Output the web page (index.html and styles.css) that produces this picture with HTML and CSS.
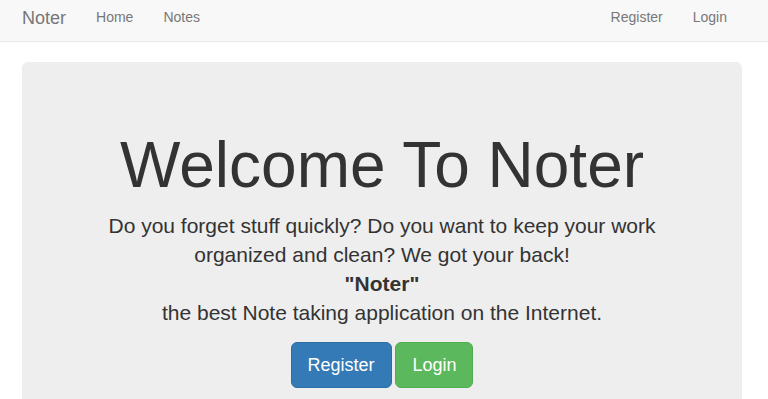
FILE: index.html
```html
<!DOCTYPE html>
<html>
<head>
<meta charset="utf-8">
<title>Noter</title>
<link rel="stylesheet" href="styles.css">
</head>
<body>
<nav class="navbar">
  <div class="container nav-inner">
    <div class="nav-left">
      <a class="brand" href="#">Noter</a>
      <a class="nav-link" href="#">Home</a>
      <a class="nav-link" href="#">Notes</a>
    </div>
    <div class="nav-right">
      <a class="nav-link" href="#">Register</a>
      <a class="nav-link" href="#">Login</a>
    </div>
  </div>
</nav>
<div class="container">
  <div class="jumbotron">
    <h1 class="title">Welcome To Noter</h1>
    <p class="lead">Do you forget stuff quickly? Do you want to keep your work organized and clean? We got your back!<br><b>"Noter"</b><br>the best Note taking application on the Internet.</p>
    <p class="actions"><a class="btn btn-primary" href="#">Register</a> <a class="btn btn-success" href="#">Login</a></p>
  </div>
</div>
</body>
</html>
```
FILE: styles.css
```css
* { box-sizing: border-box; }
html, body { margin: 0; padding: 0; }
body {
  font-family: "Liberation Sans", Arial, Helvetica, sans-serif;
  font-size: 14px;
  line-height: 1.42857;
  color: #333;
  background: #fff;
}
a { text-decoration: none; }
.container {
  width: 720px;
  margin-left: 22px;
}
.navbar {
  background: #f8f8f8;
  border-bottom: 1px solid #e7e7e7;
  height: 42px;
  margin-bottom: 20px;
}
.nav-inner {
  display: flex;
  justify-content: space-between;
  height: 41px;
}
.nav-left, .nav-right {
  display: flex;
  align-items: center;
}
.brand {
  font-size: 18px;
  color: #777;
  line-height: 20px;
  padding: 3px 15px 9px 0;
}
.nav-link {
  color: #777;
  padding: 2px 15px 9px;
  line-height: 20px;
}
.jumbotron {
  background: #eee;
  border-radius: 6px;
  padding: 48px 60px;
  text-align: center;
}
.title {
  font-size: 64px;
  font-weight: 500;
  line-height: 1.1;
  margin: 20px 0 11px;
  color: #333;
}
.lead {
  font-size: 21px;
  font-weight: 200;
  line-height: 29px;
  margin: 0 0 15px;
}
.lead b { font-weight: 700; }
.actions { margin: 0; font-size: 14px; }
.btn {
  display: inline-block;
  font-size: 18px;
  line-height: 24px;
  padding: 10px 16px;
  border-radius: 6px;
  border: 1px solid transparent;
  color: #fff;
}
.btn-primary { background: #337ab7; border-color: #2e6da4; }
.btn-success { background: #5cb85c; border-color: #4cae4c; }
```
